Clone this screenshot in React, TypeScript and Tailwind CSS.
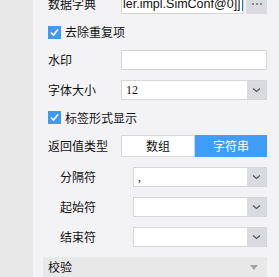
import React from "react";

const font = { fontFamily: '"Noto Sans CJK SC", "Liberation Sans", sans-serif' };

function Chevron() {
  return (
    <span className="flex h-full w-[19px] shrink-0 items-center justify-center bg-[#dadbde]">
      <svg width="9" height="6" viewBox="0 0 9 6" aria-hidden>
        <polyline points="1,1.5 4.5,4.5 8,1.5" fill="none" stroke="#555" strokeWidth="1.2" />
      </svg>
    </span>
  );
}

function Check({ label }: { label: string }) {
  return (
    <div className="flex items-center gap-[4px]">
      <span className="flex h-[13px] w-[13px] items-center justify-center bg-[#3f9bf2]">
        <svg width="11" height="11" viewBox="0 0 11 11" aria-hidden>
          <polyline points="2,5.5 4.5,8 9,2.5" fill="none" stroke="#fff" strokeWidth="1.6" />
        </svg>
      </span>
      <span className="text-[12px] leading-none text-[#111]">{label}</span>
    </div>
  );
}

function SelectRow({ label, value, indent }: { label: string; value?: string; indent?: boolean }) {
  return (
    <div className={`flex h-[20px] items-center ${indent ? "pl-[12px]" : ""}`}>
      <span className="w-[73px] shrink-0 text-[12px] leading-none text-[#111]">{label}</span>
      <div className="flex h-full flex-1 items-center border border-[#d6d6da] bg-white">
        <span className="flex-1 pl-[4px] text-[12px] leading-none text-[#111]" style={{ fontFamily: '"Liberation Serif", serif' }}>
          {value}
        </span>
        <Chevron />
      </div>
    </div>
  );
}

export default function App() {
  return (
    <div className="flex h-[277px] w-[279px] overflow-hidden bg-[#f3f3f5]" style={font}>
      <div className="w-[33px] shrink-0 bg-[#e8e8e8]" />
      <div className="flex w-[234px] flex-col pl-[15px]">
        <div className="-mt-[6px] flex h-[20px] items-center">
          <span className="w-[73px] shrink-0 text-[12px] leading-none text-[#111]">数据字典</span>
          <div className="flex h-full flex-1 items-center overflow-hidden border border-[#d6d6da] bg-white pl-px">
            <span className="whitespace-nowrap text-[12.5px] leading-none text-[#111]" style={{ fontFamily: '"Liberation Sans", sans-serif' }}>
              ler.impl.SimConf@0]]
            </span>
            <span className="ml-[1px] h-[13px] w-px bg-[#1a6fd8]" />
          </div>
          <div className="ml-[2px] flex h-full w-[21px] items-center justify-center gap-[2px] bg-[#dadbde]">
            <span className="h-[2px] w-[2px] bg-[#888]" />
            <span className="h-[2px] w-[2px] bg-[#888]" />
            <span className="h-[2px] w-[2px] bg-[#888]" />
          </div>
        </div>

        <div className="flex h-[36px] items-center">
          <Check label="去除重复项" />
        </div>

        <div className="flex h-[20px] items-center">
          <span className="w-[73px] shrink-0 text-[12px] leading-none text-[#111]">水印</span>
          <div className="h-full flex-1 border border-[#d6d6da] bg-white" />
        </div>

        <div className="mt-[10px]">
          <SelectRow label="字体大小" value="12" />
        </div>

        <div className="flex h-[35px] items-center">
          <Check label="标签形式显示" />
        </div>

        <div className="flex h-[22px] items-center">
          <span className="w-[73px] shrink-0 text-[12px] leading-none text-[#111]">返回值类型</span>
          <div className="flex h-full flex-1">
            <span className="flex flex-1 items-center justify-center border border-[#d6d6da] bg-white text-[12px] text-[#111]">
              数组
            </span>
            <span className="flex flex-1 items-center justify-center bg-[#409ef8] text-[12px] text-white">
              字符串
            </span>
          </div>
        </div>

        <div className="mt-[10px]">
          <SelectRow label="分隔符" value="," indent />
        </div>
        <div className="mt-[10px]">
          <SelectRow label="起始符" indent />
        </div>
        <div className="mt-[10px]">
          <SelectRow label="结束符" indent />
        </div>

        <div className="-ml-[5px] mt-[10px] flex h-[20px] items-center justify-between bg-[#e8e8e8] pl-[5px] pr-[9px]">
          <span className="text-[12px] leading-none text-[#111]">校验</span>
          <svg width="8" height="5" viewBox="0 0 8 5" aria-hidden>
            <polygon points="0,0 8,0 4,5" fill="#a3a3a3" />
          </svg>
        </div>
      </div>
    </div>
  );
}
